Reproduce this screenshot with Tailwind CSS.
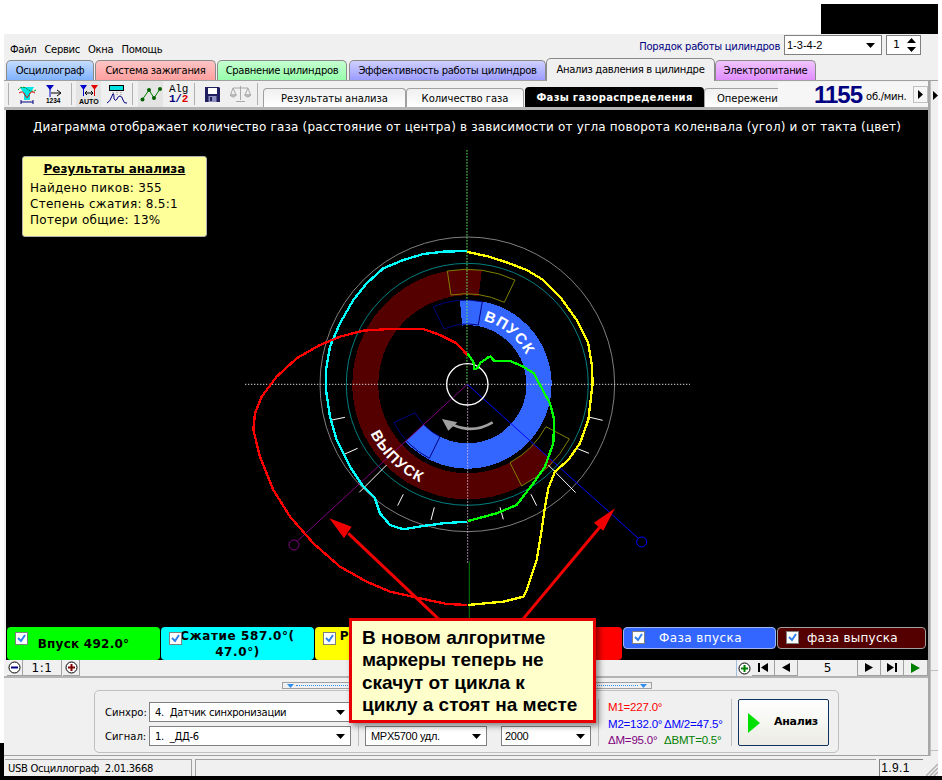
<!DOCTYPE html>
<html lang="ru">
<head>
<meta charset="UTF-8">
<title>USB Осциллограф</title>
<script src="https://cdn.jsdelivr.net/npm/@tailwindcss/browser@4"></script>
</head>
<body class="bg-white">
<div class="relative w-[942px] h-[780px] overflow-hidden bg-white flex flex-col font-['DejaVu_Sans',sans-serif] text-[10px] tracking-[-0.3px] text-black">

  <!-- black rect above the window -->
  <div class="h-[34px] flex justify-end pr-[4px] shrink-0">
    <div class="w-[117px] h-[30px] mt-[4px] bg-black"></div>
  </div>

  <div class="ml-[4px] w-[934px] h-[742px] shrink-0 bg-[#f0f0f0] flex flex-col">

    <!-- menu -->
    <div class="h-[24px] flex items-center pl-[6px] pr-[17px] shrink-0">
      <div class="flex gap-[8px] pt-[6px]"><span>Файл</span><span>Сервис</span><span>Окна</span><span>Помощь</span></div>
      <div class="ml-auto self-start mt-[1px] flex items-center gap-[3px]">
        <span class="text-[#000080] mr-[1px] pt-[2px]">Порядок работы цилиндров</span>
        <div class="w-[98px] h-[20px] bg-white border border-[#808080] flex items-center pl-[2px] pr-[6px] justify-between font-['Liberation_Sans',sans-serif] text-[11px] tracking-normal">1-3-4-2
          <svg width="9" height="5" viewBox="0 0 9 5"><path d="M0 0H9L4.5 5Z" fill="#000"/></svg>
        </div>
        <div class="w-[35px] ml-px h-[20px] bg-white border border-[#808080] flex items-center pl-[6px] pr-[4px] justify-between text-[11px]">1
          <svg width="9" height="14" viewBox="0 0 9 14"><path d="M0 5L4.5 0L9 5ZM0 9H9L4.5 14Z" fill="#000"/></svg>
        </div>
      </div>
    </div>

    <!-- top tabs -->
    <div class="h-[23px] flex items-end pl-[2px] shrink-0 border-b border-[#a0a0a0]">
      <div class="w-[88px] h-[20px] rounded-t-[5px] border border-b-0 border-[#8a8a8a] bg-linear-to-b from-[#c4dcff] to-[#80b2ff] flex items-center justify-center">Осциллограф</div>
      <div class="w-[121px] h-[20px] ml-[1px] rounded-t-[5px] border border-b-0 border-[#8a8a8a] bg-linear-to-b from-[#ffc4c4] to-[#ff9f9f] flex items-center justify-center">Система зажигания</div>
      <div class="w-[130px] h-[20px] ml-[1px] rounded-t-[5px] border border-b-0 border-[#8a8a8a] bg-linear-to-b from-[#c4ffd0] to-[#96ffaa] flex items-center justify-center">Сравнение цилиндров</div>
      <div class="w-[197px] h-[20px] ml-[2px] rounded-t-[5px] border border-b-0 border-[#8a8a8a] bg-linear-to-b from-[#d0d0ff] to-[#9c9cff] flex items-center justify-center">Эффективность работы цилиндров</div>
      <div class="w-[169px] h-[23px] -mb-px rounded-t-[5px] border border-b-0 border-[#8a8a8a] bg-[#f0f0f0] flex items-center justify-center pb-[2px]">Анализ давления в цилиндре</div>
      <div class="w-[101px] h-[20px] rounded-t-[5px] border border-b-0 border-[#8a8a8a] bg-linear-to-b from-[#f0c4ff] to-[#e08cff] flex items-center justify-center">Электропитание</div>
    </div>

    <div class="flex-1 flex min-h-0">
      <div class="w-[925px] flex flex-col">

        <!-- toolbar -->
        <div class="h-[29px] flex items-stretch shrink-0 border-b-[3px] border-[#b4b4b4] pl-[4px]">
          <div class="w-px my-[2px] bg-[#b0b0b0]"></div>
          <div class="w-[62px] flex items-center pl-[8px] gap-[9px]">
            <svg width="20" height="20" viewBox="0 0 20 20"><path d="M3 3H17L13 10V16H7V10Z" fill="#00e6e6"/><path d="M1 6Q5 1 10 5T19 6" fill="none" stroke="#008000" stroke-dasharray="2 1"/><path d="M2 9Q6 6 8 11T12 11T18 9" fill="none" stroke="#e00000"/><path d="M4 18H16M4 16V20M16 16V20" stroke="#000080"/></svg>
            <svg width="16" height="19" viewBox="0 0 16 19"><path d="M0 0H8L4 5Z" fill="#0000c0"/><path d="M4 4V12" stroke="#0000c0"/><path d="M5 8H14M11 5L15 8L11 11" fill="none" stroke="#000"/><text x="0" y="18" font-size="6.500" font-weight="700" font-family="Liberation Sans" letter-spacing="0">1234</text></svg>
          </div>
          <div class="w-px my-[2px] bg-[#b0b0b0]"></div>
          <div class="w-[25px] ml-[4px] bg-[#e4e4e4] flex items-center justify-center">
            <svg width="20" height="22" viewBox="0 0 20 22"><path d="M1 2H8L4.5 7Z" fill="#0000d0"/><path d="M12 2H19L15.5 7Z" fill="#e00000"/><path d="M4.5 6V13" stroke="#0000d0"/><path d="M15.5 6V13" stroke="#e00000"/><path d="M6 10H14M8 8L6 10L8 12M12 8L14 10L12 12" fill="none" stroke="#000"/><text x="0" y="21" font-size="7" font-weight="700" font-family="Liberation Sans" letter-spacing="0">AUTO</text></svg>
          </div>
          <div class="w-[31px] flex items-center justify-center">
            <svg width="20" height="20" viewBox="0 0 20 20"><rect x="2.500" y="1.500" width="14" height="5" fill="#00e0e0" stroke="#000"/><path d="M6 8V12M10 8V12M14 8V12" stroke="#888" stroke-dasharray="1 1"/><path d="M0 19Q3 18 5 12T7 15Q9 18 10 15T13 12T16 16T20 19" fill="none" stroke="#000080"/></svg>
          </div>
          <div class="w-px my-[2px] bg-[#b0b0b0]"></div>
          <div class="w-[25px] ml-[5px] bg-[#e4e4e4] flex items-center justify-center">
            <svg width="22" height="16" viewBox="0 0 22 16"><path d="M2 14L9 4L14 12L20 3" fill="none" stroke="#008000"/><circle cx="2.500" cy="13.500" r="2" fill="#006000"/><circle cx="9" cy="4" r="2" fill="#006000"/><circle cx="14" cy="12" r="2" fill="#006000"/><circle cx="20" cy="3" r="2" fill="#006000"/></svg>
          </div>
          <div class="w-[31px] flex flex-col items-center justify-center font-['Liberation_Mono',monospace] leading-[10px] text-[11px] font-bold">
            <span class="font-normal">Alg</span>
            <span class="text-[#000080]">1/<span class="text-[#e00000]">2</span></span>
          </div>
          <div class="w-px my-[2px] bg-[#b0b0b0]"></div>
          <div class="w-[62px] flex items-center pl-[10px] gap-[10px]">
            <svg width="15" height="15" viewBox="0 0 15 15"><path d="M0 0H14L15 1V15H0Z" fill="#202060"/><rect x="3" y="1" width="9" height="6" fill="#fff"/><rect x="3.500" y="9" width="8" height="6" fill="#9090c0"/><rect x="5" y="10" width="2" height="4" fill="#202060"/></svg>
            <svg width="21" height="17" viewBox="0 0 21 17" fill="none" stroke="#a8a8a8"><path d="M3 2H18M10.500 0V14M6 15.500H15"/><path d="M3 2L0.500 9H6ZM18 2L15 9H20.500Z"/><path d="M0 9Q3 13 6.500 9ZM14.500 9Q18 13 21 9Z" fill="#c8c8c8"/></svg>
          </div>
          <div class="w-px my-[2px] bg-[#b0b0b0]"></div>
          <!-- analysis subtabs -->
          <div class="flex items-end ml-[5px] w-[515px] overflow-hidden tracking-[-0.05px]">
            <div class="w-[143px] shrink-0 h-[19px] rounded-t-[4px] border border-b-0 border-[#a0a0a0] bg-linear-to-b from-[#f0f0f0] to-white flex items-center justify-center">Результаты анализа</div>
            <div class="w-[118px] shrink-0 h-[19px] rounded-t-[4px] border border-b-0 border-[#a0a0a0] bg-linear-to-b from-[#f0f0f0] to-white flex items-center justify-center">Количество газа</div>
            <div class="w-[179px] shrink-0 h-[20px] ml-[1px] rounded-t-[4px] bg-black text-white font-bold tracking-[0.3px] flex items-center justify-center">Фазы газораспределения</div>
            <div class="w-[78px] shrink-0 h-[19px] rounded-t-[4px] border border-b-0 border-[#a0a0a0] bg-linear-to-b from-[#f0f0f0] to-white flex items-center pl-[12px] whitespace-nowrap overflow-hidden">Опережение</div>
          </div>
          <div class="flex-1 bg-[#f6f6f6] flex items-center pl-[36px] mt-[1px] whitespace-nowrap">
            <span class="font-['Liberation_Sans',sans-serif] font-bold text-[24px] tracking-[-1px] text-[#000080] leading-none">1155</span>
            <span class="ml-[4px] pt-[3px] w-[41px]">об./мин.</span>
            <div class="ml-[6px] w-[15px] h-[17px] border border-[#c0c0c0] flex items-center justify-center"><svg width="5" height="9" viewBox="0 0 5 9"><path d="M0 0L5 4.500L0 9Z"/></svg></div>
          </div>
        </div>

        <!-- canvas -->
        <div class="relative h-[550px] shrink-0 ml-[2px] bg-black flex flex-col">
          <div class="text-white text-[12px] text-center pt-[9px] leading-[16px] whitespace-nowrap tracking-[0.18px]">Диаграмма отображает количество газа (расстояние от центра) в зависимости от угла поворота коленвала (угол) и от такта (цвет)</div>

          <!-- polar chart, coordinates are 3x around (240,230) -->
          <svg class="absolute left-0 top-0" width="923" height="550" viewBox="6 110 923 550">
            <g transform="translate(240 230) scale(0.3333)" fill="none">
              <circle cx="682" cy="463" r="306" stroke="#550000" stroke-width="78" pathLength="360" stroke-dasharray="235 125" transform="rotate(42 682 463)" shape-rendering="crispEdges"/>
              <circle cx="682" cy="463" r="215" stroke="#3366ff" stroke-width="76" pathLength="360" stroke-dasharray="232 128" transform="rotate(-95 682 463)" shape-rendering="crispEdges"/>

              <path d="M622 123A345 345 0 0 1 825 150L793 217A272 272 0 0 0 633 195Z" stroke="#808000" stroke-width="3"/>
              <path d="M988 627A346 346 0 0 1 845 768L810 698A268 268 0 0 0 918 590Z" stroke="#808000" stroke-width="3"/>
              <path d="M580 230A254 254 0 0 1 727 215L715 285A180 180 0 0 0 612 297Z" stroke="#000080" stroke-width="3"/>
              <path d="M568 685A250 250 0 0 1 462 578L525 548A178 178 0 0 0 600 620Z" stroke="#000080" stroke-width="3"/>

              <circle cx="682" cy="463" r="442" stroke="#808080" stroke-width="3"/>
              <circle cx="682" cy="463" r="363" stroke="#008080" stroke-width="3"/>

              <path d="M15 463H1350" stroke="#d8d8d8" stroke-width="3" stroke-dasharray="4 5"/>
              <path d="M681 -240V463" stroke="#60e860" stroke-width="3" stroke-dasharray="5 4"/>
              <path d="M683 463V1000" stroke="#e0c0e0" stroke-width="3" stroke-dasharray="4 5"/>
              <path d="M688 995V1190" stroke="#008000" stroke-width="3"/>

              <path d="M276 570L315 562M315 672L353 655M473 827L490 793M573 870L583 832M780 832L790 868M873 793L890 827M1010 655L1047 670M1050 562L1088 571" stroke="#fff" stroke-width="3"/>
              <path d="M358 787L440 705M925 705L1007 788" stroke="#fff" stroke-width="3"/>

              <path d="M682 463L170 935" stroke="#800080" stroke-width="3"/>
              <circle cx="162" cy="945" r="15" stroke="#800080" stroke-width="3"/>
              <path d="M682 463L1195 925" stroke="#0000ff" stroke-width="3"/>
              <circle cx="1205" cy="936" r="15" stroke="#0000ff" stroke-width="3"/>

              <circle cx="682" cy="463" r="62" stroke="#fff" stroke-width="4"/>

              <path d="M758 577Q700 612 640 585" stroke="#a0a0a0" stroke-width="8"/>
              <path d="M606 567L652 577L625 602Z" fill="#a0a0a0"/>

              <path id="arcIn" d="M730 272A197 197 0 0 1 867 396"/>
              <path id="arcOut" d="M391 611A327 327 0 0 0 570 770"/>
              <text fill="#fff" font-family="Liberation Sans" font-weight="700" font-size="45" letter-spacing="4"><textPath href="#arcIn">ВПУСК</textPath></text>
              <text fill="#fff" font-family="Liberation Sans" font-weight="700" font-size="45" letter-spacing="3"><textPath href="#arcOut">ВЫПУСК</textPath></text>

              <path d="M682 63L610 65L550 72L490 90L430 115L380 160L340 210L300 280L270 350L258 420L258 480L270 560L290 630L330 710L370 770L405 805L420 850L450 885L490 898L550 888L610 880L682 875" stroke="#00ffff" stroke-width="7" shape-rendering="crispEdges"/>
              <path d="M682 66L740 78L800 97L860 120L910 150L960 200L1010 270L1045 340L1055 400L1058 460L1045 570L1020 640L985 690L945 725L925 775L915 830L905 900L890 990L860 1080L850 1100L790 1115L685 1125" stroke="#ffff00" stroke-width="7" shape-rendering="crispEdges"/>
              <path d="M682 1125L620 1122L540 1105L450 1085L380 1055L300 1010L220 940L150 860L100 780L60 680L40 600L45 550L65 500L110 440L170 385L240 345L300 320L370 302L450 297L550 297L600 315L650 340L682 375" stroke="#ff0000" stroke-width="7" shape-rendering="crispEdges"/>
              <path d="M682 370L700 395L703 417L712 415L722 398L745 382L752 380L762 392L810 393L850 410L882 430L900 465L930 520L943 570L940 640L915 710L880 760L830 825L770 850L685 873" stroke="#00ff00" stroke-width="7" shape-rendering="crispEdges"/>

              <path d="M325 910L620 1190M1085 885L830 1190" stroke="#f00000" stroke-width="9"/>
              <path d="M268 865L335 890L312 925ZM1125 835L1062 878L1090 902Z" fill="#f00000"/>
            </g>
          </svg>

          <!-- results box -->
          <div class="absolute left-[16px] top-[46px] w-[185px] h-[81px] rounded-[3px] border border-[#b0b0b0] bg-[#ffff99] pl-[7px] pt-[4px] text-[12px] leading-[16px] tracking-[0.28px]">
            <div class="text-center font-bold underline pr-[7px] mb-[3px] tracking-normal">Результаты анализа</div>
            <div>Найдено пиков: 355</div>
            <div>Степень сжатия: 8.5:1</div>
            <div>Потери общие: 13%</div>
          </div>

          <!-- legend -->
          <div class="relative mt-auto h-[33px] flex items-start gap-px pl-px text-[12px] font-bold">
            <div class="relative w-[153px] h-[33px] rounded-[4px] bg-[#00ff00] flex items-center justify-center tracking-[0.25px]">Впуск 492.0°
              <span class="absolute left-[8px] top-[5px] w-[13px] h-[13px] border border-[#808080] bg-white flex items-center justify-center"><svg width="9" height="9" viewBox="0 0 9 9"><path d="M1 4L4 7L8 1" fill="none" stroke="#3080f0" stroke-width="2"/></svg></span>
            </div>
            <div class="relative w-[153px] h-[33px] rounded-[4px] bg-[#00ffff] leading-[16px] pt-[1px] whitespace-nowrap tracking-[0.6px] flex flex-col items-center"><span>Сжатие 587.0°(</span><span>47.0°)</span>
              <span class="absolute left-[8px] top-[5px] w-[13px] h-[13px] border border-[#808080] bg-white flex items-center justify-center"><svg width="9" height="9" viewBox="0 0 9 9"><path d="M1 4L4 7L8 1" fill="none" stroke="#3080f0" stroke-width="2"/></svg></span>
            </div>
            <div class="relative w-[153px] h-[33px] rounded-[4px] bg-[#ffff00] leading-[16px] pt-[1px] whitespace-nowrap tracking-[0.6px] flex flex-col items-center"><span>Рабочий 0.0°(</span>
              <span class="absolute left-[8px] top-[5px] w-[13px] h-[13px] border border-[#808080] bg-white flex items-center justify-center"><svg width="9" height="9" viewBox="0 0 9 9"><path d="M1 4L4 7L8 1" fill="none" stroke="#3080f0" stroke-width="2"/></svg></span>
            </div>
            <div class="w-[153px] h-[33px] rounded-[4px] bg-[#ff0000]"></div>
            <div class="relative w-[153px] h-[22px] rounded-[4px] border border-[#a0b8f0] bg-[#3366ff] text-white font-normal tracking-[0.4px] flex items-center justify-center pl-[2px]">Фаза впуска
              <span class="absolute left-[8px] top-[3px] w-[13px] h-[13px] border border-[#808080] bg-white flex items-center justify-center"><svg width="9" height="9" viewBox="0 0 9 9"><path d="M1 4L4 7L8 1" fill="none" stroke="#3080f0" stroke-width="2"/></svg></span>
            </div>
            <div class="relative w-[149px] h-[22px] rounded-[4px] border border-[#a0a0a0] bg-[#550000] text-white font-normal tracking-[0.25px] flex items-center justify-center pl-[2px]">фаза выпуска
              <span class="absolute left-[8px] top-[3px] w-[13px] h-[13px] border border-[#808080] bg-white flex items-center justify-center"><svg width="9" height="9" viewBox="0 0 9 9"><path d="M1 4L4 7L8 1" fill="none" stroke="#3080f0" stroke-width="2"/></svg></span>
            </div>
          </div>
        </div>

        <!-- navigation row -->
        <div class="h-[18px] shrink-0 flex items-stretch pl-[3px] border-b-2 border-[#b4b4b4] text-[12px] tracking-normal">
          <div class="w-[16px] border-r border-b border-[#a0a0a0] flex items-center justify-center"><svg width="13" height="13" viewBox="0 0 13 13"><circle cx="6.500" cy="6.500" r="5.500" fill="#fff" stroke="#000"/><path d="M3 6.500H10" stroke="#000080" stroke-width="2"/></svg></div>
          <div class="w-[39px] border-r border-b border-[#a0a0a0] flex items-center justify-center tracking-[0.05em]">1:1</div>
          <div class="w-[17px] ml-px border-r border-b border-[#a0a0a0] flex items-center justify-center"><svg width="13" height="13" viewBox="0 0 13 13"><circle cx="6.500" cy="6.500" r="5.500" fill="#fff" stroke="#000"/><path d="M3 6.500H10M6.500 3V10" stroke="#800000" stroke-width="2"/></svg></div>
          <div class="ml-auto w-[16px] border-l border-[#a0c0e0] flex items-center justify-center"><svg width="13" height="13" viewBox="0 0 13 13"><circle cx="6.500" cy="6.500" r="5.500" fill="#fff" stroke="#000"/><path d="M3 6.500H10M6.500 3V10" stroke="#008000" stroke-width="2"/></svg></div>
          <div class="w-[23px] border-r border-b border-[#a0a0a0] flex items-center justify-center"><svg width="10" height="9" viewBox="0 0 10 9"><path d="M0 0H2V9H0ZM10 0V9L3 4.500Z"/></svg></div>
          <div class="w-[23px] border-r border-b border-[#a0a0a0] flex items-center justify-center"><svg width="8" height="9" viewBox="0 0 8 9"><path d="M8 0V9L0 4.500Z"/></svg></div>
          <div class="w-[59px] flex items-center justify-center">5</div>
          <div class="w-[24px] border-x border-b border-[#a0a0a0] flex items-center justify-center"><svg width="8" height="9" viewBox="0 0 8 9"><path d="M0 0V9L8 4.500Z"/></svg></div>
          <div class="w-[23px] border-r border-b border-[#a0a0a0] flex items-center justify-center"><svg width="10" height="9" viewBox="0 0 10 9"><path d="M8 0H10V9H8ZM0 0V9L7 4.500Z"/></svg></div>
          <div class="w-[24px] border-r border-b border-[#a0a0a0] flex items-center justify-center"><svg width="9" height="10" viewBox="0 0 9 10"><path d="M0 0V10L9 5Z" fill="#008000"/></svg></div>
        </div>

        <!-- bottom panel -->
        <div class="flex-1 flex flex-col border-b border-[#a0a0a0]">
          <div class="ml-[278px] mt-[4px] w-[370px] h-[7px] shrink-0 border border-[#a0a0a0] flex items-center justify-between px-[4px]">
            <svg width="7" height="4" viewBox="0 0 7 4"><path d="M0 0H7L3.500 4Z" fill="#3090f0"/></svg>
            <div class="flex-1 mx-[2px] border-t border-dotted border-[#3090f0]"></div>
            <svg width="7" height="4" viewBox="0 0 7 4"><path d="M0 0H7L3.500 4Z" fill="#3090f0"/></svg>
          </div>
          <div class="ml-[90px] mt-[1px] w-[745px] h-[63px] rounded-[5px] border border-[#c0c0c0] flex items-start pt-[5px] pl-[10px]">
            <div class="w-[246px] pt-[6px] flex flex-col gap-[4px]">
              <div class="flex items-center">
                <span class="w-[44px] tracking-normal">Синхро:</span>
                <div class="w-[202px] h-[20px] bg-white border border-[#808080] flex items-center justify-between px-[5px]">4.&nbsp; Датчик синхронизации
                  <svg width="9" height="5" viewBox="0 0 9 5"><path d="M0 0H9L4.500 5Z"/></svg>
                </div>
              </div>
              <div class="flex items-center">
                <span class="w-[44px] tracking-normal">Сигнал:</span>
                <div class="w-[202px] h-[20px] bg-white border border-[#808080] flex items-center justify-between px-[5px]">1.&nbsp; _ДД-6
                  <svg width="9" height="5" viewBox="0 0 9 5"><path d="M0 0H9L4.500 5Z"/></svg>
                </div>
              </div>
            </div>
            <div class="w-px h-[20px] mt-[30px] ml-[7px] bg-[#c0c0c0]"></div>
            <div class="w-[122px] h-[20px] mt-[30px] ml-[6px] bg-white border border-[#808080] flex items-center justify-between px-[5px] font-['Liberation_Sans',sans-serif] text-[11px]">MPX5700 удл.
              <svg width="9" height="5" viewBox="0 0 9 5"><path d="M0 0H9L4.500 5Z"/></svg>
            </div>
            <div class="w-[90px] h-[20px] mt-[30px] ml-[14px] bg-white border border-[#808080] flex items-center justify-between pl-[3px] pr-[5px] font-['Liberation_Sans',sans-serif] text-[11px]">2000
              <svg width="9" height="5" viewBox="0 0 9 5"><path d="M0 0H9L4.500 5Z"/></svg>
            </div>
            <div class="w-px h-[47px] mt-[3px] ml-[7px] bg-[#c0c0c0]"></div>
            <div class="w-[132px] pl-[9px] pt-[3px] font-['Liberation_Sans',sans-serif] text-[11.500px] leading-[16.500px] tracking-[-0.2px] whitespace-nowrap">
              <div class="text-[#ff0000]">M1=227.0°</div>
              <div class="flex"><span class="w-[56px] text-[#0000ff]">M2=132.0°</span><span class="text-[#0000ff]">ΔM/2=47.5°</span></div>
              <div class="flex"><span class="w-[56px] text-[#800080]">ΔM=95.0°</span><span class="text-[#008000]">ΔBMT=0.5°</span></div>
            </div>
            <div class="w-px h-[47px] mt-[3px] bg-[#c0c0c0]"></div>
            <div class="w-[91px] h-[47px] mt-[3px] ml-[6px] rounded-[2px] border border-[#103060] bg-linear-to-b from-white to-[#ecece4] flex items-center pl-[9px] font-bold text-[11px]">
              <svg width="12" height="20" viewBox="0 0 12 20"><path d="M0 0L12 10L0 20Z" fill="#00e000"/></svg>
              <span class="ml-[14px]">Анализ</span>
            </div>
          </div>
        </div>
      </div>

      <!-- right gutter -->
      <div class="flex-1 flex flex-col border-l-2 border-[#a8a8a8]">
        <div class="h-[29px] flex items-center pl-[2px] border-l border-[#c0c0c0]"><svg width="5" height="9" viewBox="0 0 5 9"><path d="M0 0L5 4.500L0 9Z"/></svg></div>
        <div class="flex-1 border-l border-[#c0c0c0] flex flex-col">
          <div class="h-[561px] border-b border-[#c0c0c0]"></div>
          <div class="h-[80px] border-b border-[#c0c0c0]"></div>
        </div>
      </div>
    </div>

    <!-- status bar -->
    <div class="h-[20px] shrink-0 flex items-stretch pt-[3px] gap-[3px] pl-[1px]">
      <div class="w-[188px] border-t border-r border-[#a0a0a0] flex items-center pl-[3px]">USB Осциллограф&nbsp; 2.01.3668</div>
      <div class="w-[684px] border-t border-l border-[#a0a0a0]"></div>
      <div class="w-[44px] border-t border-l border-[#808080] flex items-center pl-[1px] font-['Liberation_Sans',sans-serif] text-[12px] tracking-[0.4px]">1.9.1</div>
      <svg class="self-end" width="12" height="14" viewBox="0 0 12 14"><path d="M0 14L12 2M4 14L12 6M8 14L12 10" stroke="#b0b0b0" stroke-width="1.500"/></svg>
    </div>
  </div>

  <div class="h-[4px] bg-black shrink-0"></div>
  <div class="absolute left-0 top-[743px] w-[4px] h-[37px] bg-black"></div>

  <!-- annotation callout -->
  <div class="absolute left-[349px] top-[618px] w-[247px] h-[105px] border-[3px] border-[#e80000] bg-[#ffffcc] shadow-[3px_3px_6px_rgba(0,0,0,0.45)] pl-[10px] pt-[6px] font-['Liberation_Sans',sans-serif] font-bold text-[19px] tracking-normal leading-[22.300px] whitespace-nowrap">
    В новом алгоритме<br>маркеры теперь не<br>скачут от цикла к<br>циклу а стоят на месте
  </div>
</div>
</body>
</html>
